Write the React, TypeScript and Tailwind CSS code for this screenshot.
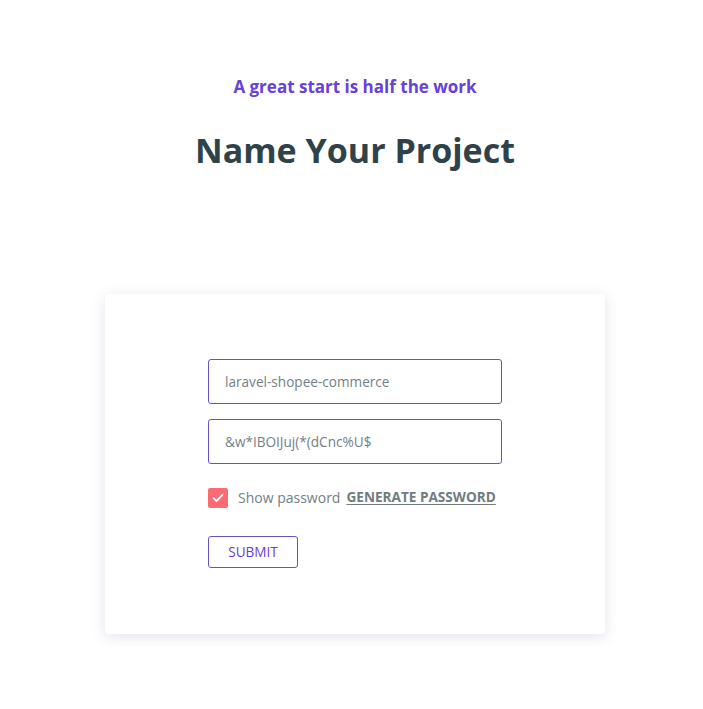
import { useState } from "react";

export default function App() {
  const [show, setShow] = useState(true);

  return (
    <div className="min-h-[709px] bg-white pl-[7px] font-['Open_Sans',sans-serif]">
      <div className="flex flex-col items-center pt-[73px]">
        <p className="text-[17px] font-bold leading-[28px] text-[#6741d9]">A great start is half the work</p>
        <h1 className="mt-[27px] text-[34px] font-bold leading-[44px] text-[#2f424a]">Name Your Project</h1>
      </div>

      <div className="mx-auto mt-[122px] w-[500px] rounded-[4px] bg-white px-[103px] pb-[66px] pt-[65px] shadow-[0_3px_14px_rgba(100,100,160,0.18)]">
        <div className="flex flex-col gap-[15px]">
          <input
            className="h-[45px] w-full rounded-[3px] border border-[#6b4fc7] px-[16px] text-[13.6px] text-[#737f85] outline-none"
            defaultValue="laravel-shopee-commerce"
          />
          <input
            className="h-[45px] w-full rounded-[3px] border border-[#6b4fc7] px-[16px] text-[13.6px] text-[#737f85] outline-none"
            type={show ? "text" : "password"}
            defaultValue="&w*IBOIJuj(*(dCnc%U$"
          />
        </div>

        <div className="mt-[23px] flex items-center">
          <button
            className={`flex h-[20px] w-[20px] items-center justify-center rounded-[2px] ${show ? "bg-[#fc6b72]" : "border border-gray-300 bg-white"}`}
            onClick={() => setShow(!show)}
          >
            {show && (
              <svg width="12" height="10" viewBox="0 0 12 10" fill="none">
                <path d="M1.5 5.2 4.5 8 10.5 1.8" stroke="white" strokeWidth="1.8" strokeLinecap="round" strokeLinejoin="round" />
              </svg>
            )}
          </button>
          <span className="ml-[10px] text-[14px] text-[#737f85]">Show password</span>
          <a href="#" className="ml-[6px] text-[13.6px] font-bold text-[#6f7c80] underline underline-offset-2">
            GENERATE PASSWORD
          </a>
        </div>

        <button className="mt-[28px] h-[32px] w-[90px] rounded-[3px] border border-[#6b4fc7] text-[13.6px] text-[#6741d9]">
          SUBMIT
        </button>
      </div>
    </div>
  );
}
